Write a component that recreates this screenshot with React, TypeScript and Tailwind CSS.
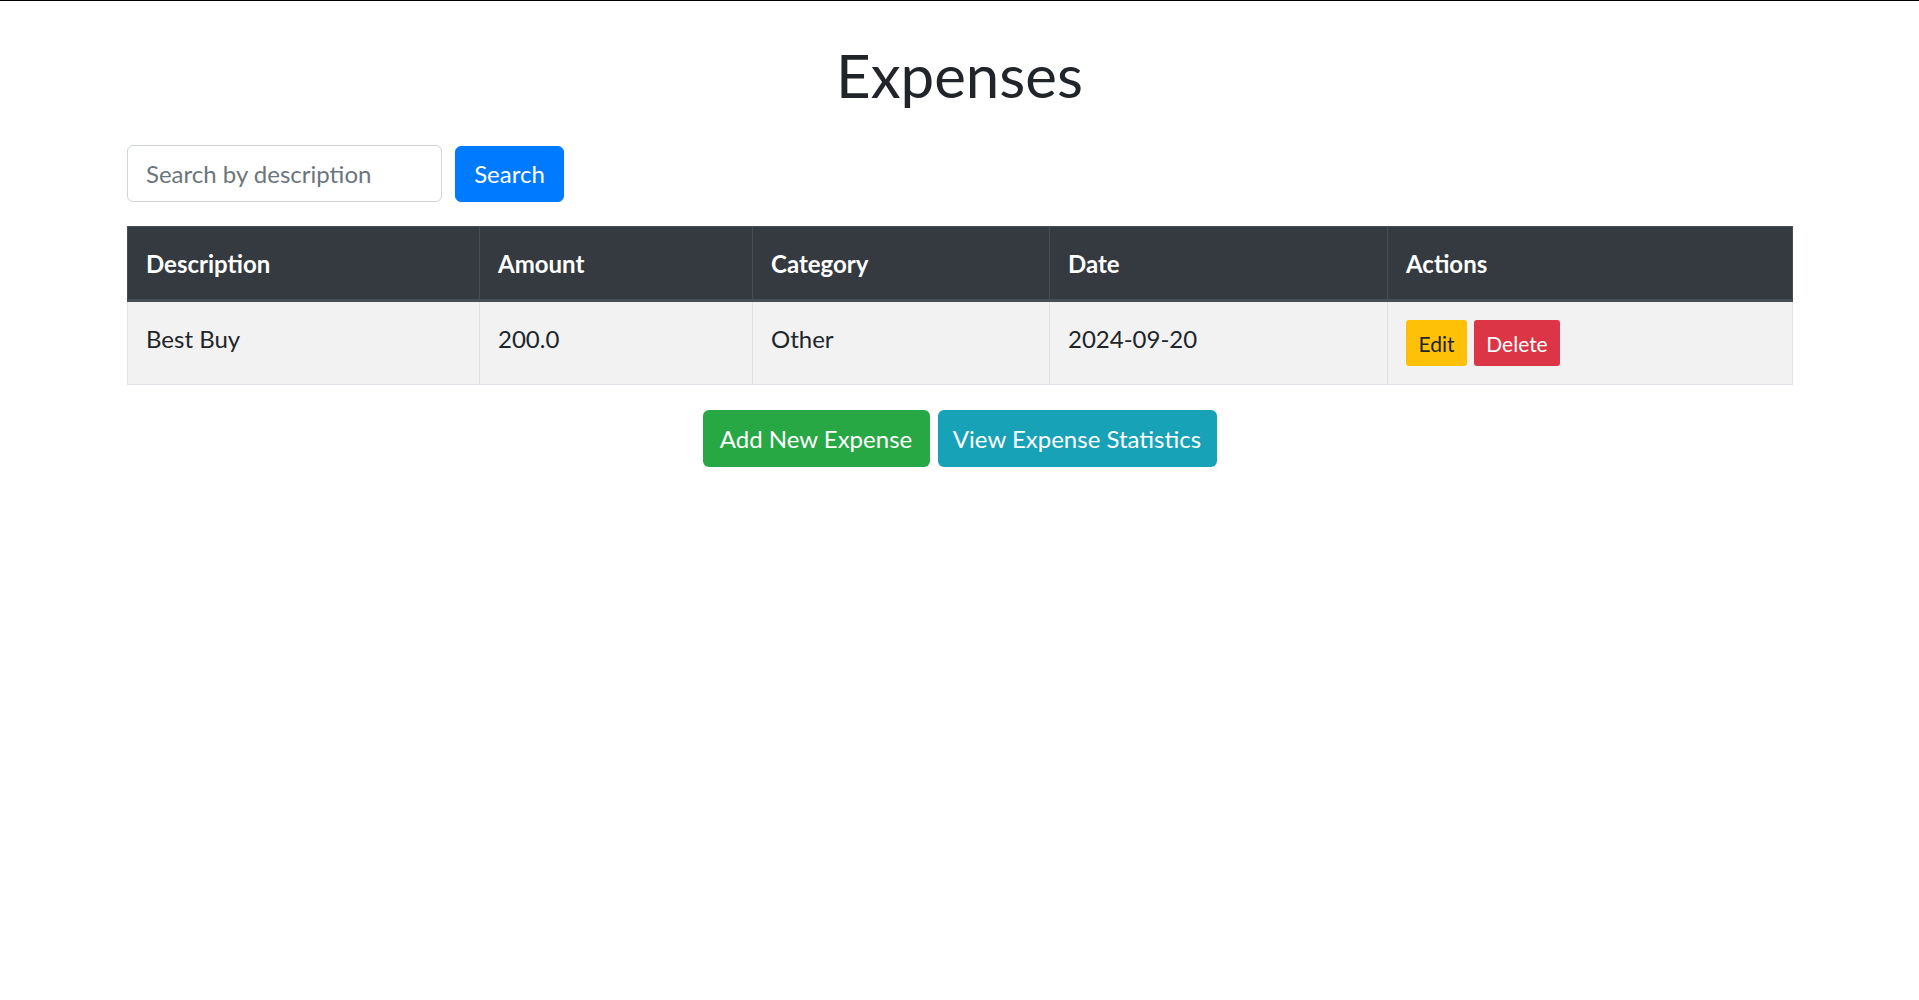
import React from "react";

const font = { fontFamily: '"Segoe UI", Lato, "Noto Sans", sans-serif' };

export default function App() {
  const rows = [
    { description: "Best Buy", amount: "200.0", category: "Other", date: "2024-09-20" },
  ];
  return (
    <div className="min-h-screen bg-white text-[#212529]" style={font}>
      <div className="h-px bg-black" />
      <div className="mx-auto w-[1665px] pt-[38px]">
        <h1 className="text-center text-[60px] leading-[72px] font-normal">Expenses</h1>
        <form className="mt-[34px] flex items-center gap-[13px]" onSubmit={(e) => e.preventDefault()}>
          <input
            type="text"
            placeholder="Search by description"
            className="h-[57px] w-[315px] rounded-[6px] border border-[#ced4da] bg-white px-[18px] text-[24px] leading-[36px] text-[#495057] outline-none placeholder:text-[#6c757d]"
          />
          <button
            type="submit"
            className="h-[56px] w-[109px] rounded-[6px] border border-[#007bff] bg-[#007bff] text-[24px] leading-[36px] text-white"
          >
            Search
          </button>
        </form>
        <table className="mt-[24px] w-full table-fixed border-collapse text-[24px] leading-[36px]">
          <colgroup>
            <col className="w-[352px]" />
            <col className="w-[273px]" />
            <col className="w-[297px]" />
            <col className="w-[338px]" />
            <col className="w-[405px]" />
          </colgroup>
          <thead>
            <tr className="bg-[#343a40] text-white">
              {["Description", "Amount", "Category", "Date", "Actions"].map((h) => (
                <th
                  key={h}
                  className="border border-b-[3px] border-[#454d55] px-[18px] pt-[19px] pb-[17px] text-left align-bottom font-bold"
                >
                  {h}
                </th>
              ))}
            </tr>
          </thead>
          <tbody>
            {rows.map((r) => (
              <tr key={r.description} className="bg-[#f2f2f2]">
                <td className="border border-[#dee2e6] px-[18px] pt-[19px] pb-[17px] align-top">{r.description}</td>
                <td className="border border-[#dee2e6] px-[18px] pt-[19px] pb-[17px] align-top">{r.amount}</td>
                <td className="border border-[#dee2e6] px-[18px] pt-[19px] pb-[17px] align-top">{r.category}</td>
                <td className="border border-[#dee2e6] px-[18px] pt-[19px] pb-[17px] align-top">{r.date}</td>
                <td className="border border-[#dee2e6] px-[18px] py-[18px] align-top">
                  <div className="flex gap-[7px]">
                    <button className="h-[46px] w-[61px] rounded-[3px] bg-[#ffc107] text-[21px] leading-[31px] text-[#212529]">
                      Edit
                    </button>
                    <button className="h-[46px] w-[86px] rounded-[3px] bg-[#dc3545] text-[21px] leading-[31px] text-white">
                      Delete
                    </button>
                  </div>
                </td>
              </tr>
            ))}
          </tbody>
        </table>
        <div className="mt-[25px] flex justify-center gap-[8px]">
          <button className="h-[57px] w-[227px] rounded-[6px] bg-[#28a745] text-[24px] leading-[36px] text-white">
            Add New Expense
          </button>
          <button className="h-[57px] w-[279px] rounded-[6px] bg-[#17a2b8] text-[24px] leading-[36px] text-white">
            View Expense Statistics
          </button>
        </div>
      </div>
    </div>
  );
}
